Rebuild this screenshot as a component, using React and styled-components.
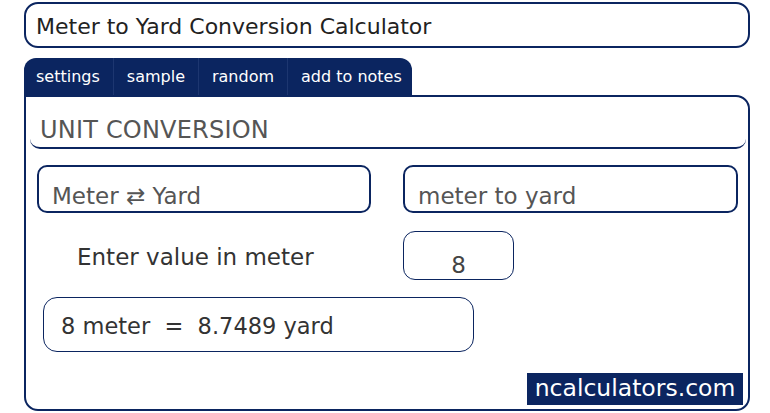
import React from "react";
import styled, { createGlobalStyle } from "styled-components";

const NAVY = "#0b2560";
const FONT = `"DejaVu Sans", "Noto Sans", "Liberation Sans", sans-serif`;

const Global = createGlobalStyle`
  html, body { margin: 0; padding: 0; background: #fff; }
  body { font-family: ${FONT}; }
  * { box-sizing: border-box; }
`;

const Page = styled.div`
  width: 770px;
  height: 413px;
  padding: 2px 20px 0 24px;
  display: flex;
  flex-direction: column;
`;

const TitleBox = styled.div`
  height: 46px;
  border: 2.5px solid ${NAVY};
  border-radius: 14px;
  display: flex;
  align-items: center;
  padding: 3px 0 0 10px;
  font-size: 22px;
  line-height: 1;
  color: #222;
`;

const Tabs = styled.div`
  margin-top: 10px;
  width: 388px;
  height: 37px;
  background: ${NAVY};
  border-radius: 12px 12px 0 0;
  display: flex;
  align-items: stretch;
`;

const Tab = styled.div`
  display: flex;
  align-items: center;
  padding: 0 ${(p) => (p.$last ? 6 : 13)}px 0 ${(p) => (p.$first ? 12 : 13)}px;
  color: #fff;
  font-size: 16px;
  border-right: ${(p) => (p.$last ? "none" : "1px solid #1d3670")};
`;

const Panel = styled.div`
  flex: 1;
  margin-bottom: 2px;
  border: 2px solid ${NAVY};
  border-radius: 0 14px 14px 14px;
  display: flex;
  flex-direction: column;
  padding: 0 2px 4px 4px;
`;

const Header = styled.div`
  height: 52px;
  border-bottom: 2px solid ${NAVY};
  border-radius: 0 0 10px 10px;
  display: flex;
  align-items: center;
  padding: 16px 0 0 10px;
  font-size: 24px;
  line-height: 1;
  letter-spacing: 0.2px;
  color: #555;
`;

const Grid = styled.div`
  display: grid;
  grid-template-columns: 334px 335px;
  column-gap: 32px;
  padding-left: 7px;
`;

const SelectBox = styled.div`
  height: 48px;
  border: 2.5px solid ${NAVY};
  border-radius: 10px;
  display: flex;
  align-items: center;
  padding: 14px 0 0 13px;
  font-size: 23px;
  line-height: 1;
  color: #555;
`;

const Label = styled.div`
  display: flex;
  align-items: center;
  padding: 3px 0 0 40px;
  font-size: 23px;
  line-height: 1;
  color: #333;
`;

const InputBox = styled.div`
  width: 111px;
  height: 49px;
  border: 1.5px solid ${NAVY};
  border-radius: 12px;
  display: flex;
  align-items: center;
  justify-content: center;
  padding-top: 19px;
  font-size: 23px;
  line-height: 1;
  color: #444;
`;

const ResultBox = styled.div`
  margin-left: 6px;
  width: 431px;
  height: 55px;
  border: 1.5px solid ${NAVY};
  border-radius: 14px;
  display: flex;
  align-items: center;
  padding: 3px 0 0 17px;
  font-size: 22.5px;
  line-height: 1;
  color: #333;
  white-space: pre;
`;

const Footer = styled.div`
  margin-top: auto;
  display: flex;
  justify-content: flex-end;
  padding-right: 3px;
`;

const Badge = styled.div`
  background: ${NAVY};
  color: #fff;
  height: 32px;
  width: 216px;
  display: flex;
  align-items: center;
  justify-content: center;
  font-size: 23.5px;
  line-height: 1;
`;

export default function App() {
  return (
    <>
      <Global />
      <Page>
        <TitleBox>Meter to Yard Conversion Calculator</TitleBox>
        <Tabs>
          <Tab $first>settings</Tab>
          <Tab>sample</Tab>
          <Tab>random</Tab>
          <Tab $last>add to notes</Tab>
        </Tabs>
        <Panel>
          <Header>UNIT CONVERSION</Header>
          <Grid style={{ marginTop: 16 }}>
            <SelectBox>Meter ⇄ Yard</SelectBox>
            <SelectBox>meter to yard</SelectBox>
          </Grid>
          <Grid style={{ marginTop: 18 }}>
            <Label>Enter value in meter</Label>
            <InputBox>8</InputBox>
          </Grid>
          <Grid style={{ marginTop: 17 }}>
            <ResultBox>{"8 meter  =  8.7489 yard"}</ResultBox>
          </Grid>
          <Footer>
            <Badge>ncalculators.com</Badge>
          </Footer>
        </Panel>
      </Page>
    </>
  );
}
